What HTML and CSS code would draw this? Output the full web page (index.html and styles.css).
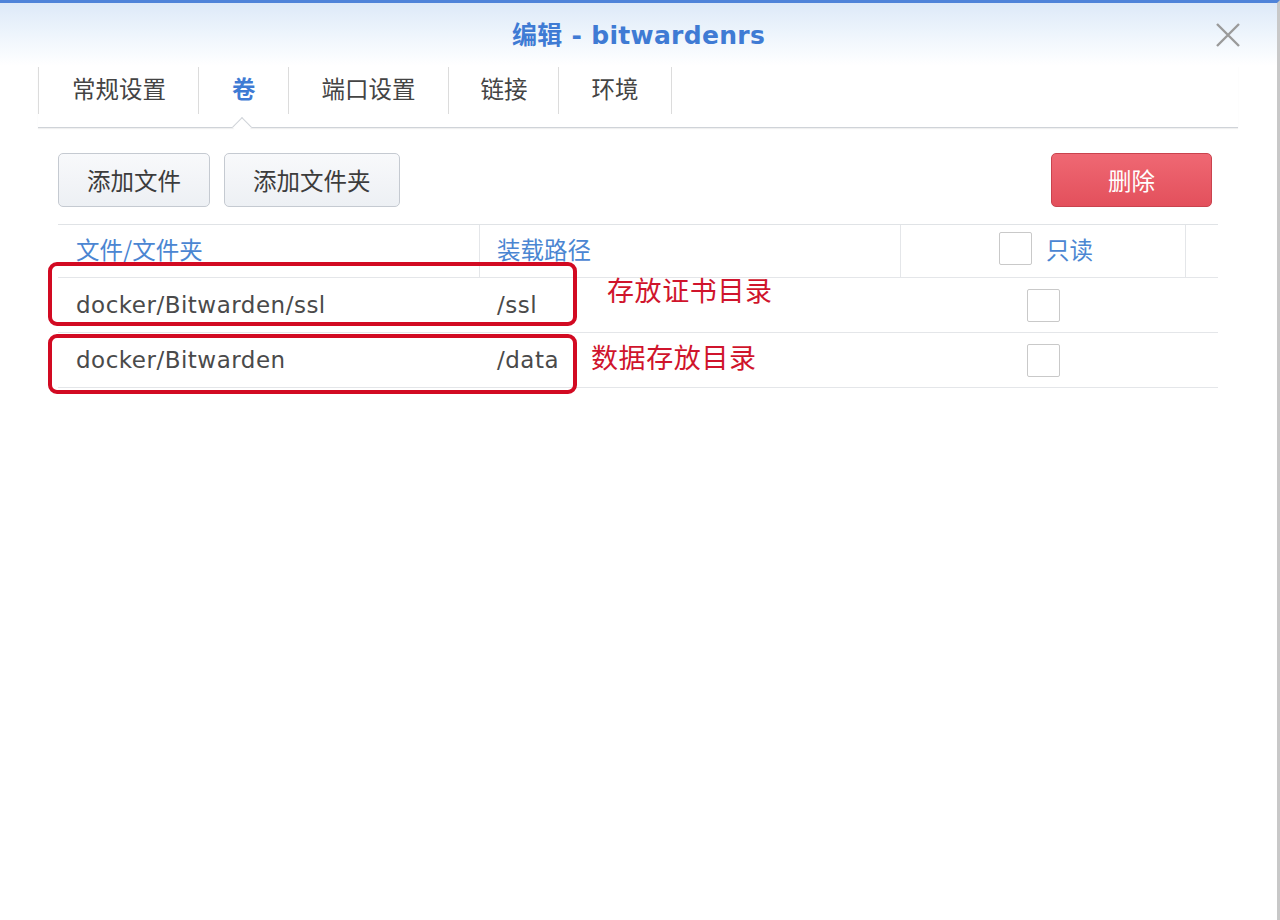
FILE: index.html
```html
<!DOCTYPE html>
<html lang="zh-CN">
<head>
    <meta charset="UTF-8">
    <title>编辑 - bitwardenrs</title>
    <link rel="stylesheet" href="styles.css">
</head>
<body>
    <div class="dialog">
        <div class="header">
            <h1>编辑 - bitwardenrs</h1>
            <span class="close">
                <svg width="26" height="26" viewBox="0 0 26 26"><path d="M2 2 L24 24 M24 2 L2 24" stroke="#9a9a9a" stroke-width="2.4" fill="none"/></svg>
            </span>
        </div>

        <div class="tabs">
            <div class="tab">常规设置</div>
            <div class="tab active">卷</div>
            <div class="tab">端口设置</div>
            <div class="tab narrow">链接</div>
            <div class="tab last">环境</div>
            <span class="notch"></span>
        </div>

        <div class="content">
            <div class="toolbar">
                <button class="btn">添加文件</button>
                <button class="btn">添加文件夹</button>
                <span class="spacer"></span>
                <button class="btn btn-danger">删除</button>
            </div>

            <div class="grid">
                <div class="row head">
                    <div class="cell col-file">文件/文件夹</div>
                    <div class="cell col-mount">装载路径</div>
                    <div class="cell col-ro"><span class="check"></span>只读</div>
                    <div class="cell col-end"></div>
                </div>
                <div class="row">
                    <div class="cell col-file">docker/Bitwarden/ssl</div>
                    <div class="cell col-mount">/ssl</div>
                    <div class="cell col-ro"><span class="check"></span></div>
                    <div class="cell col-end"></div>
                </div>
                <div class="row">
                    <div class="cell col-file">docker/Bitwarden</div>
                    <div class="cell col-mount">/data</div>
                    <div class="cell col-ro"><span class="check"></span></div>
                    <div class="cell col-end"></div>
                </div>
            </div>
        </div>

        <!-- red annotations drawn on top of the screenshot -->
        <div class="mark mark-1"></div>
        <div class="mark mark-2"></div>
        <div class="note note-1">存放证书目录</div>
        <div class="note note-2">数据存放目录</div>
    </div>
</body>
</html>
```

FILE: styles.css
```css
body {
    margin: 0;
    font-family: "DejaVu Sans", "Noto Sans CJK SC", sans-serif;
    background-color: #ffffff;
    color: #4a4a4a;
}

.dialog {
    position: relative;
    width: 1277px;
    height: 917px;
    border-top: 3px solid #4f83d9;
    border-right: 3px solid #c8c8c8;
    background-color: white;
}

.header {
    position: relative;
    height: 63px;
    background: linear-gradient(to bottom, #dde9f8 0%, #eef5fc 50%, #ffffff 100%);
    display: flex;
    align-items: center;
    justify-content: center;
}

.header h1 {
    margin: 0 0 4px 0;
    font-size: 25px;
    font-weight: bold;
    color: #3f7bd4;
    letter-spacing: 0.3px;
}

.close {
    position: absolute;
    top: 19px;
    right: 36px;
    width: 26px;
    height: 26px;
}

.tabs {
    position: relative;
    display: flex;
    margin: 0 39px 0 38px;
    height: 61px;
    border-bottom: 1px solid #cfd3d8;
    box-shadow: 0 1px 1px rgba(0, 0, 0, 0.06);
}

.tab {
    height: 47px;
    margin-top: 1px;
    padding: 0 32px 2px 33px;
    border-left: 1px solid #dcdcdc;
    font-size: 23.5px;
    line-height: 43px;
    color: #444;
    font-family: "Noto Sans CJK SC", sans-serif;
    box-sizing: border-box;
}

.tab.narrow {
    padding: 0 30px 2px 32px;
}

.tab.last {
    border-right: 1px solid #dcdcdc;
}

.tab.active {
    color: #3f7bd4;
    font-weight: bold;
}

.notch {
    position: absolute;
    left: 197px;
    bottom: -7px;
    width: 13px;
    height: 13px;
    background: white;
    border-top: 1px solid #cfd3d8;
    border-left: 1px solid #cfd3d8;
    transform: rotate(45deg);
}

.content {
    padding: 25px 59px 0 58px;
}

.toolbar {
    display: flex;
    align-items: center;
    gap: 14px;
    margin-bottom: 17px;
}

.spacer {
    flex: 1;
}

.btn {
    height: 54px;
    padding: 0 28px;
    font-family: "Noto Sans CJK SC", sans-serif;
    font-size: 23.5px;
    color: #3c3c3c;
    background: linear-gradient(to bottom, #f8f9fb, #edf0f4);
    border: 1px solid #c5cad1;
    border-radius: 5px;
}

.btn-danger {
    width: 161px;
    margin-right: 6px;
    color: #ffffff;
    background: linear-gradient(to bottom, #ef6873, #e3505c);
    border-color: #c9434e;
}

.grid {
    border-top: 1px solid #e0e3e6;
}

.row {
    display: flex;
    height: 54px;
    border-bottom: 1px solid #e4e6e9;
    font-size: 23px;
    letter-spacing: 0.5px;
}

.row.head {
    height: 52px;
    font-family: "Noto Sans CJK SC", sans-serif;
    font-size: 23.5px;
    letter-spacing: 0;
    color: #4b86d2;
}

.cell {
    display: flex;
    align-items: center;
    box-sizing: border-box;
}

.row.head .cell {
    padding-bottom: 5px;
    border-right: 1px solid #e4e6e9;
}

.row.head .col-end {
    border-right: none;
}

.col-file {
    width: 422px;
    padding-left: 18px;
}

.col-mount {
    width: 421px;
    padding-left: 17px;
}

.col-ro {
    width: 285px;
    justify-content: center;
    gap: 14px;
}

.row.head .col-ro {
    padding-left: 6px;
}

.col-end {
    flex: 1;
}

.check {
    width: 33px;
    height: 33px;
    box-sizing: border-box;
    border: 1px solid #c9c9c9;
    border-radius: 2px;
    background: white;
}

.mark {
    position: absolute;
    left: 48px;
    width: 521px;
    border: 4px solid #d20a22;
    border-radius: 9px;
}

.mark-1 {
    top: 259px;
    height: 56px;
}

.mark-2 {
    top: 331px;
    height: 52px;
}

.note {
    position: absolute;
    font-family: "Noto Sans CJK SC", sans-serif;
    font-size: 27px;
    color: #d0142c;
    letter-spacing: 0.6px;
}

.note-1 {
    left: 607px;
    top: 267px;
}

.note-2 {
    left: 591px;
    top: 334px;
}
```
